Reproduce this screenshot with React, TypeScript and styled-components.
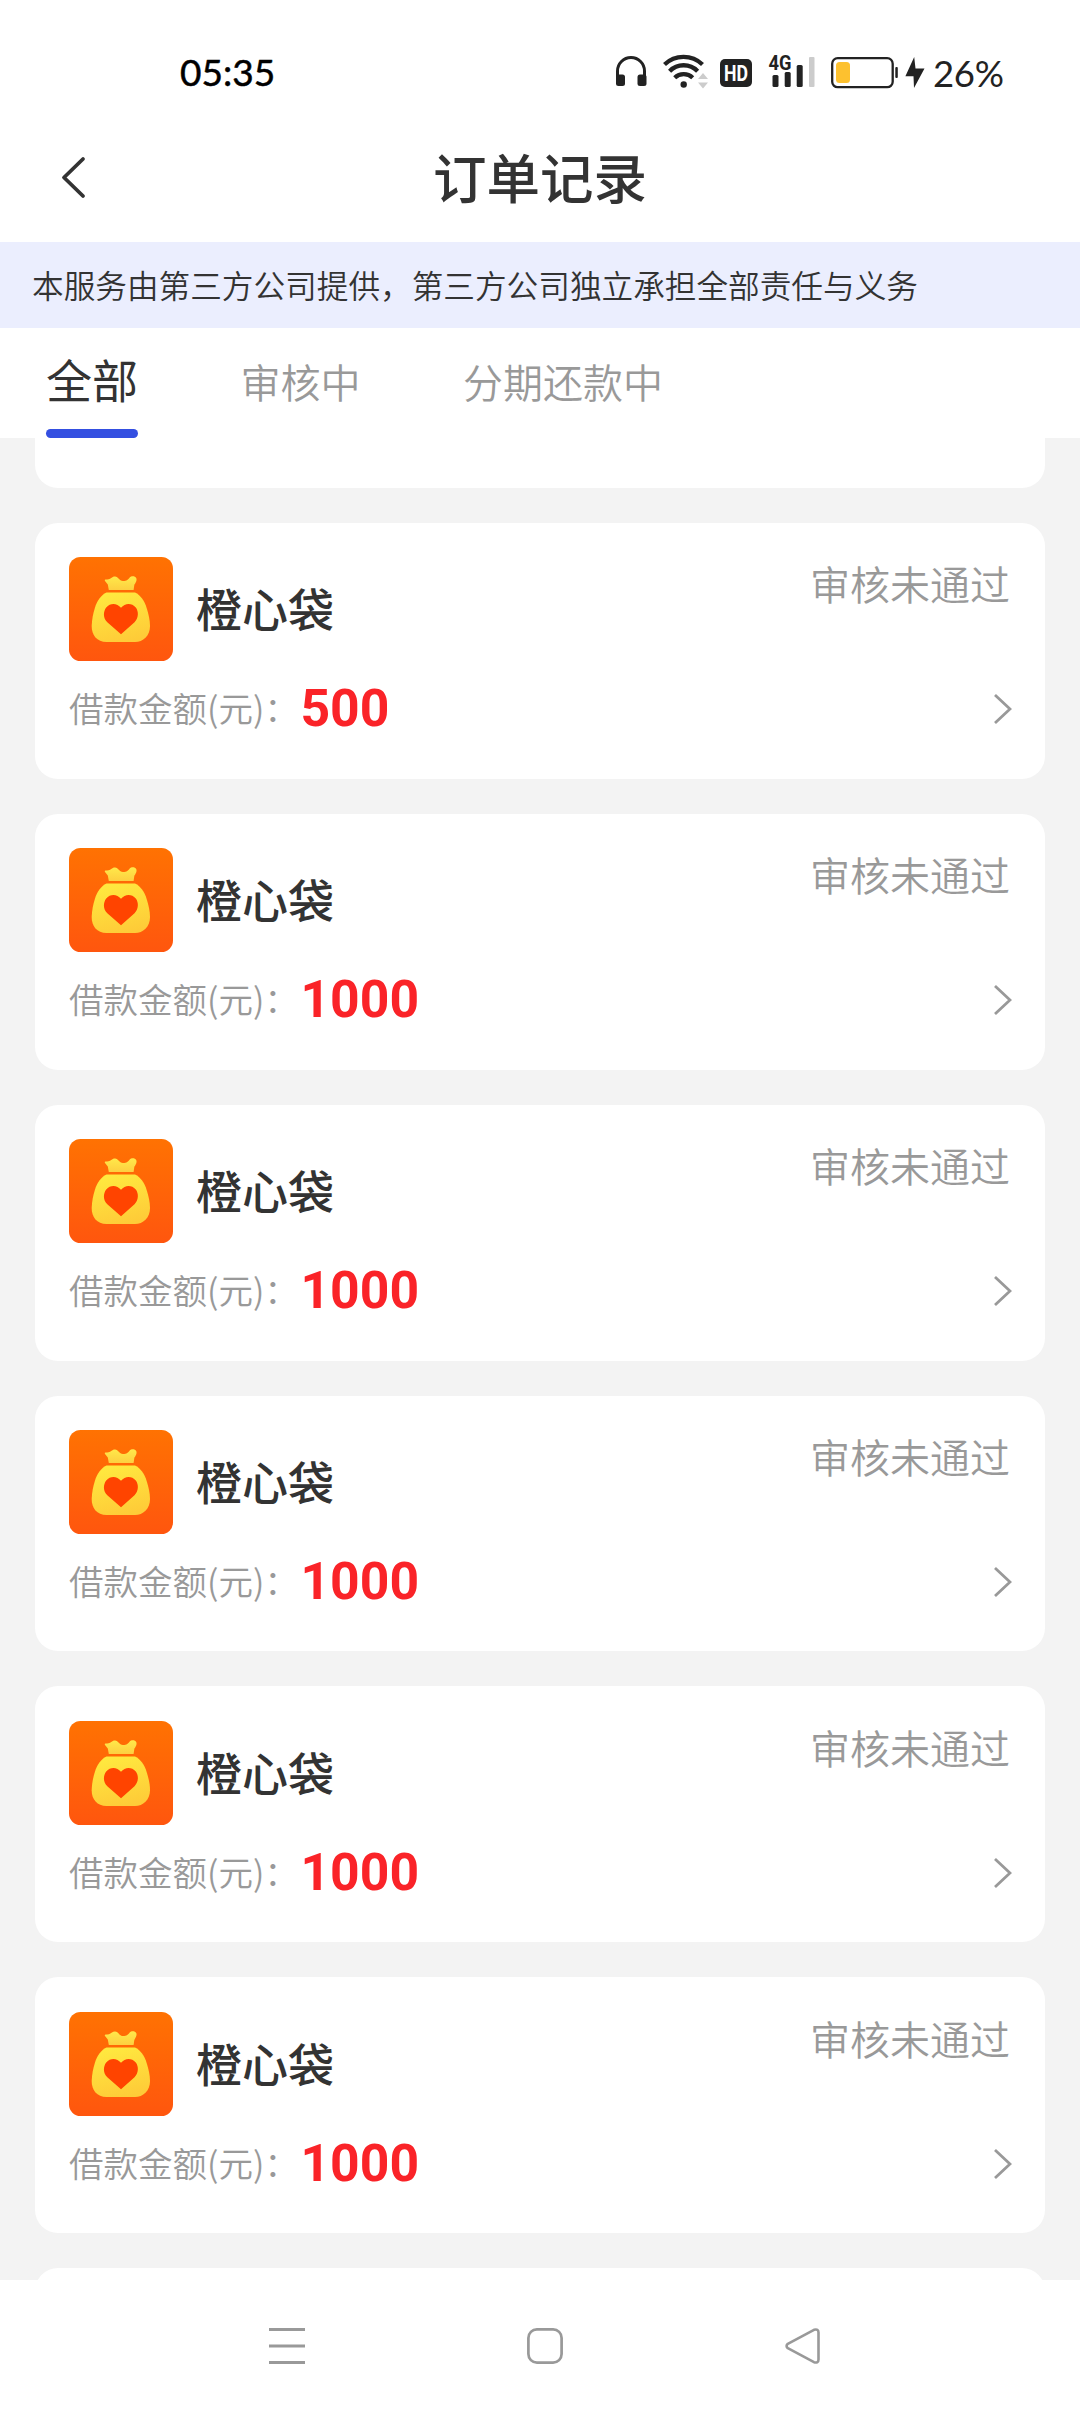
import React from "react";
import styled, { createGlobalStyle, css } from "styled-components";

const GlobalStyle = createGlobalStyle`
  * { box-sizing: border-box; }
  html, body { margin: 0; padding: 0; background: #f3f3f3; }
  body { font-family: "Noto Sans CJK SC", sans-serif; color: #333; }
`;

const Screen = styled.div`
  width: 1080px;
  height: 2412px;
  display: flex;
  flex-direction: column;
  overflow: hidden;
  background: #f3f3f3;
`;

const StatusBar = styled.div`
  flex: none;
  height: 114px;
  padding: 32px 75px 0 180px;
  display: flex;
  align-items: flex-start;
  justify-content: space-between;
  background: #fff;
`;

const Clock = styled.span`
  font: 400 37px/82px Lato, sans-serif;
  height: 82px;
  color: #000;
  -webkit-text-stroke: 0.5px #000;
  margin-top: -1px;
`;

const StatusIcons = styled.div`
  display: flex;
  align-items: flex-start;
`;

const SystemIconsWrap = styled.div`
  display: flex;
  padding-top: 8px;
  margin-right: 2px;
`;

const Battery = styled.span`
  width: 72px;
  font: 400 36.5px/83px Lato, sans-serif;
  letter-spacing: -0.3px;
  color: #222;
  white-space: nowrap;
`;

const Header = styled.header`
  flex: none;
  height: 128px;
  padding: 0 54px;
  display: grid;
  grid-template-columns: 60px 1fr 60px;
  align-items: center;
  background: #fff;
`;

const BackButton = styled.button`
  width: 60px;
  height: 60px;
  padding: 0;
  border: 0;
  background: none;
  display: flex;
  align-items: center;
`;

const Title = styled.h1`
  margin: 0;
  padding-bottom: 5px;
  font-size: 53.5px;
  font-weight: 500;
  line-height: 80px;
  text-align: center;
  color: #333;
`;

const Notice = styled.div`
  flex: none;
  height: 86px;
  padding-left: 32px;
  font-size: 31.65px;
  font-weight: 350;
  line-height: 85px;
  white-space: nowrap;
  background: #ebeefe;
`;

const Tabs = styled.nav`
  flex: none;
  height: 110px;
  padding-left: 46px;
  display: flex;
  align-items: stretch;
  gap: 102.5px;
  background: #fff;
`;

const Tab = styled.div<{ $active?: boolean }>`
  display: flex;
  flex-direction: column;
  justify-content: space-between;
  font-size: 40px;
  font-weight: 350;
  line-height: 107px;
  color: #999;
  ${(p) =>
    p.$active &&
    css`
      font-size: 46px;
      font-weight: 400;
      line-height: 101px;
      color: #333;
      &::after {
        content: "";
        height: 9px;
        border-radius: 4.5px;
        background: #344fe1;
      }
    `}
`;

const List = styled.main`
  flex: 1;
  min-height: 0;
  overflow: hidden;
  padding: 0 35px;
  display: flex;
  flex-direction: column;
  gap: 35px;
`;

const CardBox = styled.section`
  flex: none;
  height: 255.85px;
  padding: 34.4px 35px 0 34px;
  border-radius: 23px;
  background: #fff;
`;

const ScrolledCard = styled.section<{ $edge: "top" | "bottom" }>`
  flex: none;
  height: ${(p) => (p.$edge === "top" ? 50 : 60)}px;
  border-radius: ${(p) => (p.$edge === "top" ? "0 0 23px 23px" : "23px")};
  background: #fff;
`;

const CardTop = styled.div`
  display: flex;
  height: 104px;
`;

const Name = styled.h2`
  flex: 1;
  margin: 0 0 0 23px;
  font-size: 46px;
  font-weight: 500;
  line-height: 101px;
  color: #333;
`;

const Status = styled.span`
  font-size: 40px;
  font-weight: 350;
  line-height: 53px;
  color: #999;
`;

const CardBottom = styled.div`
  display: flex;
  align-items: flex-start;
  height: 96px;
`;

const Label = styled.span`
  font-size: 34.5px;
  font-weight: 350;
  line-height: 93px;
  color: #999;
`;

const Amount = styled.strong`
  flex: 1;
  margin-left: 1.6px;
  font: 700 51.7px/96px Roboto, sans-serif;
  color: #fa2328;
`;

const Arrow = styled.svg`
  margin: 32px -2px 0 0;
`;

const NavBar = styled.footer`
  flex: none;
  height: 132px;
  padding: 48px 259px 0 269px;
  display: flex;
  justify-content: space-between;
  align-items: flex-start;
  background: #fff;
`;

const SystemIcons = () => (
  <svg width="320" height="60" viewBox="611 40 320 60">
    <g fill="#222">
      <path d="M617.5 78V71a13.5 13.5 0 0 1 27 0v7" fill="none" stroke="#222" strokeWidth="3" />
      <rect x="616" y="74.5" width="9" height="11.5" rx="2.5" />
      <rect x="637.5" y="74.5" width="9" height="11.5" rx="2.5" />
      <g fill="none" stroke="#222" strokeWidth="4.3">
        <path d="M664.5 64.5a27.5 27.5 0 0 1 38 0" />
        <path d="M669.6 71.2a19.5 19.5 0 0 1 28 0" />
        <path d="M674.7 77.8a13 13 0 0 1 18 0" />
      </g>
      <circle cx="683.7" cy="84.5" r="3.2" />
      <path d="M698 79l5-6 5 6zM698 82.5l5 6 5-6z" fill="#ccc" />
      <rect x="720" y="59" width="32" height="28" rx="5" />
      <text x="724" y="81" fill="#fff" fontFamily="Roboto" fontWeight="700" fontSize="22" textLength="24" lengthAdjust="spacingAndGlyphs">HD</text>
      <text x="768.5" y="70" fontFamily="Roboto" fontWeight="700" fontSize="19.5" textLength="23" lengthAdjust="spacingAndGlyphs">4G</text>
      <rect x="772.5" y="75" width="6" height="12" rx="1.5" />
      <rect x="784.7" y="72" width="6" height="15" rx="1.5" />
      <rect x="796.7" y="65" width="6" height="22" rx="1.5" />
      <rect x="809" y="57" width="5.5" height="30" rx="1" fill="#ccc" />
      <rect x="832.2" y="58.2" width="60.5" height="29" rx="5.5" fill="none" stroke="#222" strokeWidth="2.3" />
      <rect x="836" y="62" width="14" height="21" rx="3.5" fill="#fdc12f" />
      <rect x="895.3" y="67" width="2.5" height="11" rx="1" />
      <path d="M914.2 57L905.4 76.3H913.5L914 88L924.5 68.5H915.5Z" />
    </g>
  </svg>
);

const BagIcon = () => (
  <svg width="104" height="104" viewBox="0 0 104 104">
    <defs>
      <linearGradient id="tile" x1="0" y1="0" x2="0" y2="1">
        <stop offset="0" stopColor="#ff7202" />
        <stop offset="1" stopColor="#ff560e" />
      </linearGradient>
      <linearGradient id="bag" x1="0.3" y1="0" x2="0.6" y2="1">
        <stop offset="0" stopColor="#ffe93f" />
        <stop offset="1" stopColor="#fecb38" />
      </linearGradient>
      <linearGradient id="knot" x1="0" y1="0" x2="0" y2="1">
        <stop offset="0" stopColor="#ffe94a" />
        <stop offset="1" stopColor="#fdcf40" />
      </linearGradient>
    </defs>
    <rect width="104" height="104" rx="11.5" fill="url(#tile)" />
    <path d="M39.8 33L38.8 27.5L36 24C35.2 22.5 36.3 22.3 38 22.4C42 22.5 42.5 19.5 46 19.5C49.5 19.5 50 24 54 24C58 24 59 22.7 60.5 20.8C62.5 18.5 66 19 67.2 21C68.5 23.5 66 26.5 65.3 28L64.6 33Z" fill="url(#knot)" />
    <path d="M37.5 35.5H66C71.5 38 75.5 44 77.5 50.5C79.5 57 81 63 81 69C81 79 74 85 66 85H37.5C28 85 22.5 78 22.7 69C23 62 24 57 26 50.5C28 44 32 38 37.5 35.5Z" fill="url(#bag)" />
    <path d="M52 77.2L38.3 65.2C33.8 61 34.2 54.5 37.2 50.5C41.5 45.5 48 46 52 50.7C56 46 62.5 45.5 66.8 50.5C69.8 54.5 69.7 61 65.5 65.2Z" fill="#ff4400" />
  </svg>
);

const OrderCard = ({ amount }: { amount: number }) => (
  <CardBox>
    <CardTop>
      <BagIcon />
      <Name>橙心袋</Name>
      <Status>审核未通过</Status>
    </CardTop>
    <CardBottom>
      <Label>借款金额(元)：</Label>
      <Amount>{amount}</Amount>
      <Arrow width="18" height="32" viewBox="0 0 18 32" fill="none" stroke="#999" strokeWidth="2.8">
        <path d="M1 2L16 16L1 30" />
      </Arrow>
    </CardBottom>
  </CardBox>
);

const amounts = [500, 1000, 1000, 1000, 1000, 1000];

export default function App() {
  return (
    <Screen>
      <GlobalStyle />
      <StatusBar>
        <Clock>05:35</Clock>
        <StatusIcons>
          <SystemIconsWrap>
            <SystemIcons />
          </SystemIconsWrap>
          <Battery>26%</Battery>
        </StatusIcons>
      </StatusBar>
      <Header>
        <BackButton aria-label="返回">
          <svg width="40" height="46" viewBox="0 0 40 46" fill="none" stroke="#333" strokeWidth="3.8" strokeLinecap="round" strokeLinejoin="round">
            <path d="M29 4L10 22.5L29 41" />
          </svg>
        </BackButton>
        <Title>订单记录</Title>
      </Header>
      <Notice>本服务由第三方公司提供，第三方公司独立承担全部责任与义务</Notice>
      <Tabs>
        <Tab $active>全部</Tab>
        <Tab>审核中</Tab>
        <Tab>分期还款中</Tab>
      </Tabs>
      <List>
        <ScrolledCard $edge="top" />
        {amounts.map((amount, i) => (
          <OrderCard key={i} amount={amount} />
        ))}
        <ScrolledCard $edge="bottom" />
      </List>
      <NavBar>
        <svg width="36" height="36" viewBox="0 0 36 36" stroke="#999" strokeWidth="3">
          <path d="M0 1.5H36M0 18H36M0 34.5H36" />
        </svg>
        <svg width="36" height="36" viewBox="0 0 36 36" fill="none" stroke="#999" strokeWidth="2.7">
          <rect x="1.4" y="1.4" width="33.2" height="33.2" rx="8.5" />
        </svg>
        <svg width="36" height="36" viewBox="0 0 36 36" fill="none" stroke="#999" strokeWidth="2.6" strokeLinejoin="round">
          <path d="M2.8 15.8L29 1.8Q33.5 0.5 33.5 4.5V31.5Q33.5 35.5 29 34.2L2.8 20.2Q0.3 18 2.8 15.8Z" />
        </svg>
      </NavBar>
    </Screen>
  );
}
